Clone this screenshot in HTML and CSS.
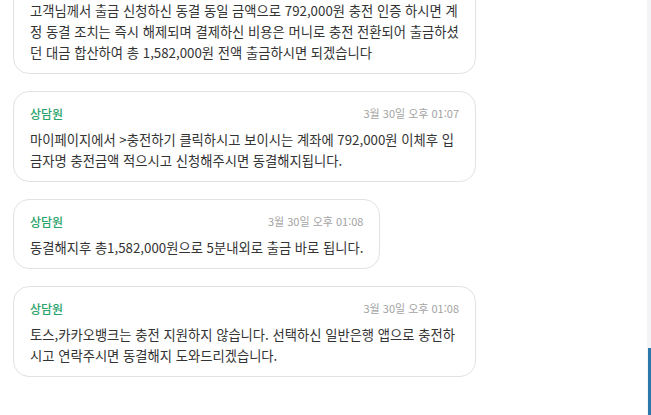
FILE: index.html
```html
<!DOCTYPE html>
<html lang="ko">
<head>
<meta charset="utf-8">
<link rel="stylesheet" href="styles.css">
</head>
<body>
<div class="chat">
  <div class="msg cut">
    <div class="text">고객님께서 출금 신청하신 동결 동일 금액으로 792,000원 충전 인증 하시면 계정 동결 조치는 즉시 해제되며 결제하신 비용은 머니로 충전 전환되어 출금하셨던 대금 합산하여 총 1,582,000원 전액 출금하시면 되겠습니다</div>
  </div>
  <div class="msg">
    <div class="head"><span class="name">상담원</span><span class="time">3월 30일 오후 01:07</span></div>
    <div class="text">마이페이지에서 &gt;충전하기 클릭하시고 보이시는 계좌에 792,000원 이체후 입금자명 충전금액 적으시고 신청해주시면 동결해지됩니다.</div>
  </div>
  <div class="msg">
    <div class="head"><span class="name">상담원</span><span class="time">3월 30일 오후 01:08</span></div>
    <div class="text">동결해지후 총1,582,000원으로 5분내외로 출금 바로 됩니다.</div>
  </div>
  <div class="msg">
    <div class="head"><span class="name">상담원</span><span class="time">3월 30일 오후 01:08</span></div>
    <div class="text">토스,카카오뱅크는 충전 지원하지 않습니다. 선택하신 일반은행 앱으로 충전하시고 연락주시면 동결해지 도와드리겠습니다.</div>
  </div>
</div>
<div class="scroll"><div class="thumb"></div></div>
</body>
</html>
```
FILE: styles.css
```css
html, body {
  margin: 0;
  padding: 0;
  background: #ffffff;
  overflow: hidden;
}
body {
  font-family: "Noto Sans CJK KR", "Noto Sans", sans-serif;
  color: #333333;
  width: 651px;
  height: 415px;
}
.chat {
  display: flex;
  flex-direction: column;
  align-items: flex-start;
  gap: 17px;
  padding-left: 13px;
}
.msg {
  box-sizing: border-box;
  max-width: 463px;
  border: 1px solid #e2e2e2;
  border-radius: 16px;
  padding: 13px 16px 10px;
  background: #fff;
}
.msg.cut {
  margin-top: -31px;
  padding-top: 30px;
}
.head {
  display: flex;
  justify-content: space-between;
  align-items: center;
  height: 16px;
  margin-bottom: 8px;
  gap: 20px;
}
.name {
  font-size: 12px;
  color: #2aa36b;
  font-weight: 500;
}
.time {
  font-size: 11px;
  color: #a3a3a3;
}
.text {
  font-size: 13.3px;
  line-height: 21px;
}
.scroll {
  position: fixed;
  top: 0;
  right: 0;
  width: 4px;
  height: 415px;
  background: #f3f4f6;
}
.thumb {
  position: absolute;
  left: 1px;
  right: 0;
  top: 348px;
  bottom: 0;
  background: #2b78ad;
}
```
